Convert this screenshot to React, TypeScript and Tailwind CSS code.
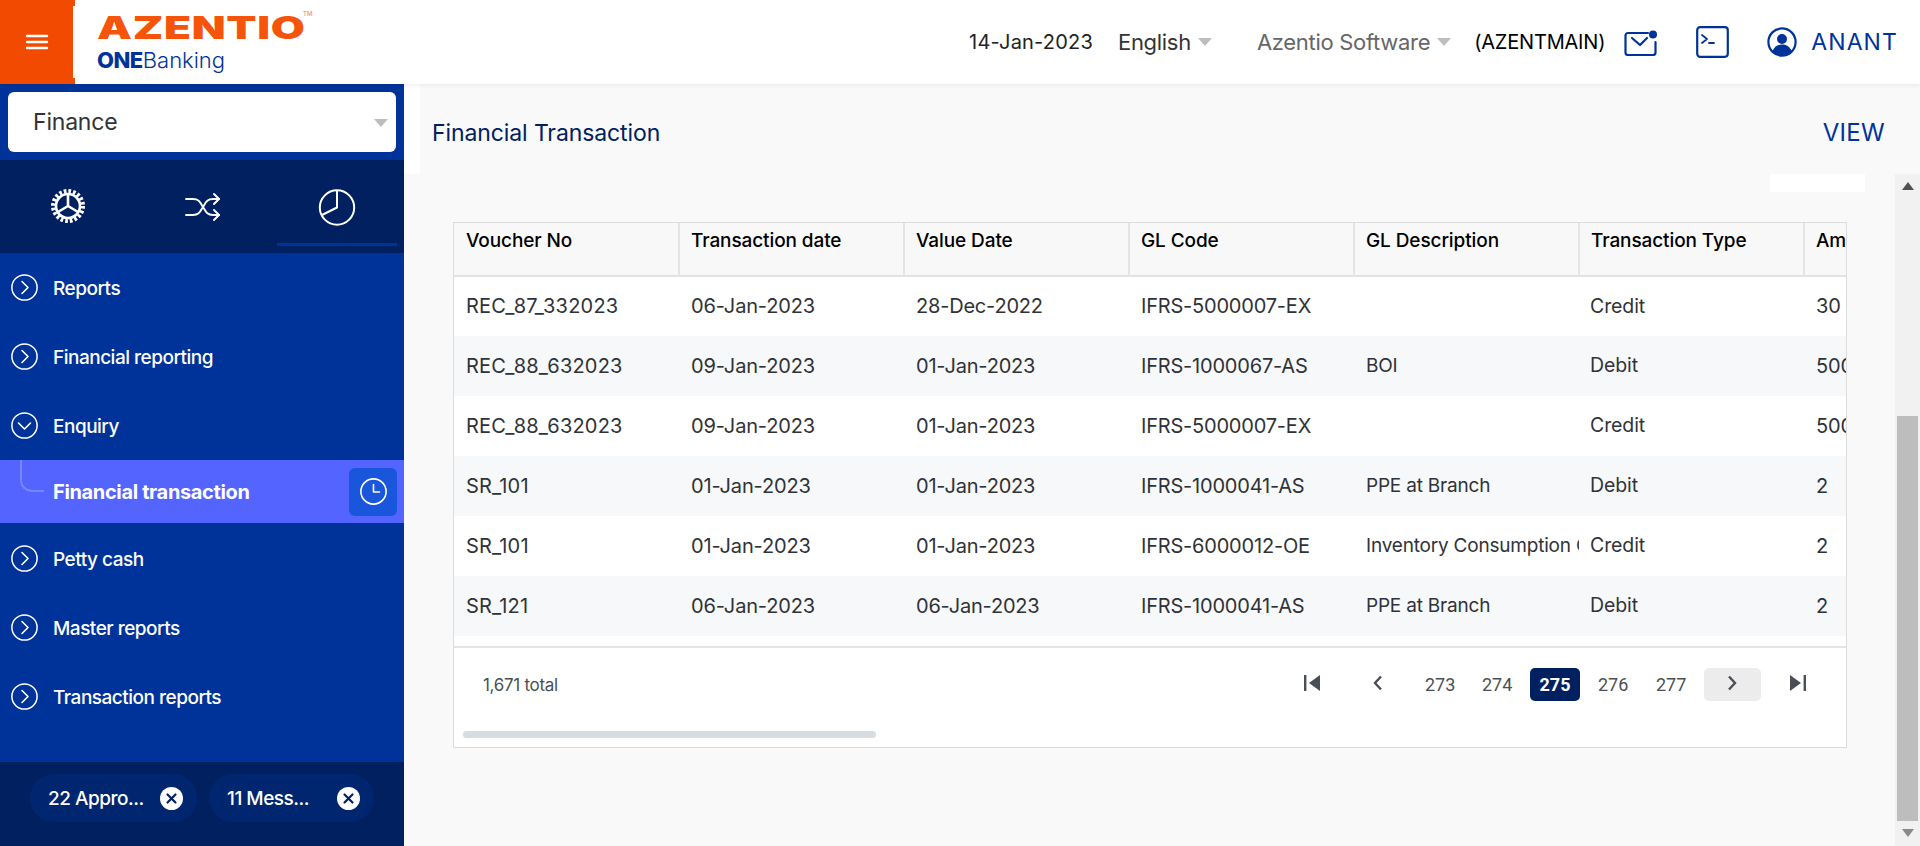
import React from "react";

const rows = [
  ["REC_87_332023", "06-Jan-2023", "28-Dec-2022", "IFRS-5000007-EX", "", "Credit", "30"],
  ["REC_88_632023", "09-Jan-2023", "01-Jan-2023", "IFRS-1000067-AS", "BOI", "Debit", "500.00"],
  ["REC_88_632023", "09-Jan-2023", "01-Jan-2023", "IFRS-5000007-EX", "", "Credit", "500.00"],
  ["SR_101", "01-Jan-2023", "01-Jan-2023", "IFRS-1000041-AS", "PPE at Branch", "Debit", "2"],
  ["SR_101", "01-Jan-2023", "01-Jan-2023", "IFRS-6000012-OE", "Inventory Consumption Charges", "Credit", "2"],
  ["SR_121", "06-Jan-2023", "06-Jan-2023", "IFRS-1000041-AS", "PPE at Branch", "Debit", "2"],
];
const heads = ["Voucher No", "Transaction date", "Value Date", "GL Code", "GL Description", "Transaction Type", "Amount"];
const cellText = [
  "pl-[12px] pb-[1px] text-[20px] tracking-[0.2px]",
  "pl-[12px] pb-[1px] text-[20px] tracking-[-0.15px]",
  "pl-[12px] pb-[1px] text-[20px] tracking-[-0.2px]",
  "pl-[12px] pb-[1px] text-[20px] tracking-[-0.2px]",
  "pl-[12px] text-[19px] tracking-[-0.2px]",
  "pl-[11px] text-[19.5px] tracking-[-0.1px]",
  "pl-[12px] pb-[1px] text-[20px] tracking-[-0.1px]",
];

function Caret({ className }: { className: string }) {
  return (
    <svg width="14" height="8" viewBox="0 0 14 8" className={className}>
      <path d="M0 0h14L7 8z" fill="#bdbdbd" />
    </svg>
  );
}

function CircleChevron({ down }: { down?: boolean }) {
  return (
    <svg width="27" height="27" viewBox="0 0 27 27" fill="none" stroke="#fff" strokeWidth="1.5" strokeLinecap="round" strokeLinejoin="round" className="shrink-0">
      <circle cx="13.5" cy="13.5" r="12.6" />
      <path d={down ? "M7.5 11l6 6 6-6" : "M11 7.5l6 6-6 6"} strokeWidth="1.6" />
    </svg>
  );
}

function MenuItem({ label, down, className }: { label: string; down?: boolean; className: string }) {
  return (
    <div className={`flex items-center pl-[11px] gap-[15px] ${className}`}>
      <CircleChevron down={down} />
      <span className="pt-[4px] text-[19px] font-medium tracking-[-0.5px] text-white">{label}</span>
    </div>
  );
}

function Chip({ label, className }: { label: string; className: string }) {
  return (
    <div className={`flex h-[48px] items-center justify-between rounded-full bg-[#00266f] ${className}`}>
      <span className="pt-[2px] text-[19px] font-medium tracking-[-0.5px] text-white">{label}</span>
      <svg width="23" height="23" viewBox="0 0 23 23">
        <circle cx="11.5" cy="11.5" r="11.5" fill="#fff" />
        <path d="M7.5 7.5l8 8M15.5 7.5l-8 8" stroke="#002060" strokeWidth="2.2" strokeLinecap="round" />
      </svg>
    </div>
  );
}

function PageNum({ n, className }: { n: string; className: string }) {
  return <span className={`text-center font-['Roboto',sans-serif] text-[18px] text-[#4a4f55] ${className}`}>{n}</span>;
}

export default function App() {
  return (
    <div className="flex h-screen w-full flex-col overflow-hidden bg-[#f9f9f9] font-['Inter',sans-serif]">
      {/* top bar */}
      <header className="relative z-10 flex h-[84px] shrink-0 items-center bg-white shadow-[0_2px_4px_rgba(0,0,0,0.06)]">
        <div className="relative flex h-full w-[73px] shrink-0 items-center justify-center bg-[#f24a00]">
          <svg width="24" height="16" viewBox="0 0 24 16" stroke="#fff" strokeWidth="2.4" strokeLinecap="round">
            <path d="M2 2h20M2 8h20M2 14h20" />
          </svg>
          <div className="absolute top-0 -right-[2px] h-[6px] w-[2px] bg-[#f24a00]" />
          <div className="absolute -right-[2px] bottom-0 h-[6px] w-[2px] bg-[#f24a00]" />
        </div>
        <div className="ml-[24px] flex w-[300px] shrink-0 flex-col">
          <div className="relative flex h-[34px] items-center">
            <span className="origin-left scale-x-[1.42] text-[31px] leading-none font-black tracking-[0.5px] text-[#f5540a]">AZENTIO</span>
            <span className="absolute top-[1px] left-[206px] text-[6px] leading-none font-semibold text-[#f5a080]">TM</span>
          </div>
          <div className="mt-[2px] flex h-[28px] items-center text-[22px] leading-none text-[#003399]">
            <span className="font-extrabold tracking-[-0.5px]">ONE</span>
            <span className="font-light">Banking</span>
          </div>
        </div>
        <div className="ml-auto flex items-center pr-[22px]">
          <span className="text-[20px] tracking-[0.2px] text-[#222]">14-Jan-2023</span>
          <span className="ml-[25px] text-[22px] tracking-[-0.3px] text-[#333]">English</span>
          <Caret className="ml-[7px]" />
          <span className="ml-[45px] text-[22px] tracking-[-0.3px] text-[#666]">Azentio Software</span>
          <Caret className="ml-[7px]" />
          <span className="ml-[23px] text-[20px] tracking-[-0.2px] text-black">(AZENTMAIN)</span>
          <svg width="33" height="26" viewBox="0 0 33 26" fill="none" stroke="#003399" strokeWidth="2.2" strokeLinecap="round" strokeLinejoin="round" className="ml-[19px] mt-[2px]">
            <path d="M24 3H4a2.5 2.5 0 0 0-2.5 2.5v17A2.5 2.5 0 0 0 4 25h25a2.5 2.5 0 0 0 2.5-2.5V12" />
            <path d="M8 8l8 7 7-7" />
            <circle cx="29" cy="4.5" r="4" fill="#003399" stroke="none" />
          </svg>
          <svg width="33" height="32" viewBox="0 0 33 32" fill="none" stroke="#003399" strokeWidth="2.2" strokeLinecap="round" strokeLinejoin="round" className="ml-[39px] -mt-[1px]">
            <rect x="1.2" y="1.2" width="30.6" height="29.6" rx="3" />
            <path d="M6 9l5 4-5 4M13 17h5" strokeWidth="1.8" />
          </svg>
          <svg width="30" height="30" viewBox="0 0 30 30" fill="none" className="ml-[38px]">
            <circle cx="15" cy="15" r="13.6" stroke="#003399" strokeWidth="2.2" />
            <circle cx="15" cy="12" r="5" fill="#003399" />
            <path d="M5.5 24c2-5 5.5-6.5 9.5-6.5s7.5 1.5 9.5 6.5a13 13 0 0 1-19 0z" fill="#003399" />
          </svg>
          <span className="ml-[14px] text-[23px] tracking-[1.1px] text-[#003399]">ANANT</span>
        </div>
      </header>

      <div className="flex min-h-0 flex-1">
        {/* sidebar */}
        <aside className="flex w-[404px] shrink-0 flex-col bg-[#003399]">
          <div className="mx-[8px] mt-[8px] flex h-[60px] items-center justify-between rounded-[6px] bg-white pl-[25px] pr-[8px]">
            <span className="text-[23px] tracking-[-0.2px] text-[#333]">Finance</span>
            <Caret className="mt-[1px]" />
          </div>
          <div className="mt-[8px] flex h-[93px] bg-[#002060]">
            <div className="flex w-[135px] items-center justify-center pb-[1px]">
              <svg width="36" height="36" viewBox="0 0 36 36" fill="none" stroke="#fff">
                <circle cx="18" cy="18" r="15" strokeWidth="4" strokeDasharray="2.7 2.01" />
                <circle cx="18" cy="18" r="12" strokeWidth="2.6" />
                <path d="M18 18V6.5M18 18L8 24M18 18l10 6" strokeWidth="2.6" />
              </svg>
            </div>
            <div className="flex w-[135px] items-center justify-center">
              <svg width="36" height="28" viewBox="0 0 36 28" fill="none" stroke="#fff" strokeWidth="1.9" strokeLinecap="round" strokeLinejoin="round">
                <path d="M1 6h7c6 0 7 3 10 8s4 8 10 8h6" />
                <path d="M1 22h7c6 0 7-3 10-8s4-8 10-8h6" />
                <path d="M29 1l5 5-5 5M29 17l5 5-5 5" />
              </svg>
            </div>
            <div className="relative ml-[7px] flex w-[120px] items-center justify-center">
              <svg width="38" height="38" viewBox="0 0 38 38" fill="none" stroke="#fff" strokeWidth="2" strokeLinejoin="round">
                <circle cx="19" cy="19.5" r="17.2" />
                <path d="M19 2.5v17L4 27" />
              </svg>
              <div className="absolute right-0 bottom-[7px] left-0 h-[3px] bg-[#003399]" />
            </div>
          </div>

          <div className="flex flex-1 flex-col">
            <MenuItem label="Reports" className="mt-[21px] h-[27px]" />
            <MenuItem label="Financial reporting" className="mt-[42px] h-[27px]" />
            <MenuItem label="Enquiry" down className="mt-[42px] h-[27px]" />
            <div className="relative mt-[21px] flex h-[63px] items-center bg-[#5464ff] pl-[53px] pr-[7px]">
              <div className="absolute top-0 left-[20px] h-[32px] w-[24px] rounded-bl-[12px] border-b-2 border-l-2 border-[#7785ff]" />
              <span className="pt-[1px] text-[20px] font-bold tracking-[-0.35px] text-white">Financial transaction</span>
              <div className="ml-auto flex h-[48px] w-[48px] items-center justify-center rounded-[6px] bg-[#1a56db]">
                <svg width="27" height="27" viewBox="0 0 27 27" fill="none" stroke="#fff" strokeWidth="1.6" strokeLinecap="round" strokeLinejoin="round">
                  <circle cx="13.5" cy="13.5" r="12.6" />
                  <path d="M13.5 6.5v7.5h6" />
                </svg>
              </div>
            </div>
            <MenuItem label="Petty cash" className="mt-[22px] h-[27px]" />
            <MenuItem label="Master reports" className="mt-[42px] h-[27px]" />
            <MenuItem label="Transaction reports" className="mt-[42px] h-[27px]" />
          </div>

          <div className="flex h-[84px] items-start gap-[12px] bg-[#002060] pt-[12px] pl-[30px]">
            <Chip label="22 Appro..." className="w-[167px] pl-[18px] pr-[14px]" />
            <Chip label="11 Mess..." className="w-[165px] pl-[18px] pr-[14px]" />
          </div>
        </aside>

        {/* content */}
        <main className="flex min-w-0 flex-1 flex-col bg-[#f9f9f9]">
          <div className="flex h-[90px] shrink-0 border-l-[16px] border-white">
            <div className="flex flex-1 items-center justify-between pt-[8px] pl-[12px] pr-[35px]">
              <h1 className="text-[23px] font-normal tracking-[-0.1px] text-[#002060]">Financial Transaction</h1>
              <span className="text-[24px] tracking-[0.3px] text-[#003399]">VIEW</span>
            </div>
          </div>
          <div className="flex min-h-0 flex-1">
            <div className="flex min-w-0 flex-1 flex-col">
              <div className="mr-[30px] ml-auto h-[18px] w-[95px] bg-white" />
              <section className="mt-[30px] mr-[48px] ml-[49px] flex h-[526px] flex-col overflow-hidden border border-[#dcdcdc] bg-white">
                <div className="min-h-0 flex-1 overflow-hidden">
                  <table className="w-[1575px] table-fixed border-collapse">
                    <thead>
                      <tr className="h-[53px] border-b-2 border-[#e2e2e2] bg-[#f8f8f8]">
                        {heads.map((h) => (
                          <th key={h} className="h-[53px] w-[225px] border-r-2 border-[#e4e4e4] pt-[4px] pr-[12px] pb-[19px] pl-[11px] text-left align-top text-[19px] leading-[28px] font-medium tracking-[-0.1px] text-black first:pl-[12px] last:border-r-0">
                            {h}
                          </th>
                        ))}
                      </tr>
                    </thead>
                    <tbody>
                      {rows.map((r, i) => (
                        <tr key={i} className={`h-[60px] ${i % 2 ? "bg-[#f7f8fa]" : "bg-white"}`}>
                          {r.map((c, j) => (
                            <td key={j} className={`overflow-hidden pr-[0px] whitespace-nowrap text-[#2f3338] ${cellText[j]}`}>
                              {c}
                            </td>
                          ))}
                        </tr>
                      ))}
                    </tbody>
                  </table>
                </div>
                <div className="h-[101px] shrink-0 border-t-2 border-[#e4e4e4] px-[9px]">
                  <div className="flex h-[73px] items-center">
                    <span className="mt-[2px] ml-[20px] text-[17px] tracking-[-0.3px] text-[#4a4f55]">1,671 total</span>
                    <div className="mr-[31px] ml-auto flex items-center">
                      <svg width="16" height="16" viewBox="0 0 16 16" fill="#4a4f55" className="mr-[52px] -mt-[3px]">
                        <rect x="0" y="0" width="2.4" height="16" />
                        <path d="M16 0v16L5 8z" />
                      </svg>
                      <svg width="11" height="16" viewBox="0 0 11 16" fill="none" stroke="#4a4f55" strokeWidth="2.4" className="mr-[42px] -mt-[3px]">
                        <path d="M9 1.5L3 8l6 6.5" />
                      </svg>
                      <PageNum n="273" className="w-[30px]" />
                      <PageNum n="274" className="ml-[27px] w-[30px]" />
                      <span className="ml-[18px] flex h-[33px] w-[50px] items-center justify-center rounded-[5px] bg-[#002060] font-['Roboto',sans-serif] text-[18px] font-bold text-white">275</span>
                      <PageNum n="276" className="ml-[18px] w-[30px]" />
                      <PageNum n="277" className="ml-[28px] w-[30px]" />
                      <span className="ml-[18px] flex h-[33px] w-[57px] items-center justify-center rounded-[5px] bg-[#ececec]">
                        <svg width="11" height="16" viewBox="0 0 11 16" fill="none" stroke="#4a4f55" strokeWidth="2.4" className="-mt-[3px]">
                          <path d="M2 1.5L8 8l-6 6.5" />
                        </svg>
                      </span>
                      <svg width="16" height="16" viewBox="0 0 16 16" fill="#4a4f55" className="ml-[29px] -mt-[3px]">
                        <rect x="13.6" y="0" width="2.4" height="16" />
                        <path d="M0 0v16L11 8z" />
                      </svg>
                    </div>
                  </div>
                  <div className="mt-[10px] h-[7px] w-[413px] rounded-full bg-[#d6dce0]" />
                </div>
              </section>
            </div>
            <div className="flex w-[25px] shrink-0 flex-col items-center bg-[#f1f1f1]">
              <svg width="12" height="8" viewBox="0 0 12 8" className="mt-[8px]">
                <path d="M6 0l6 8H0z" fill="#505050" />
              </svg>
              <div className="mt-[226px] h-[405px] w-[21px] bg-[#bdbdbd]" />
              <svg width="12" height="8" viewBox="0 0 12 8" className="mt-[8px]">
                <path d="M0 0h12L6 8z" fill="#8a8a8a" />
              </svg>
            </div>
          </div>
        </main>
      </div>
    </div>
  );
}
